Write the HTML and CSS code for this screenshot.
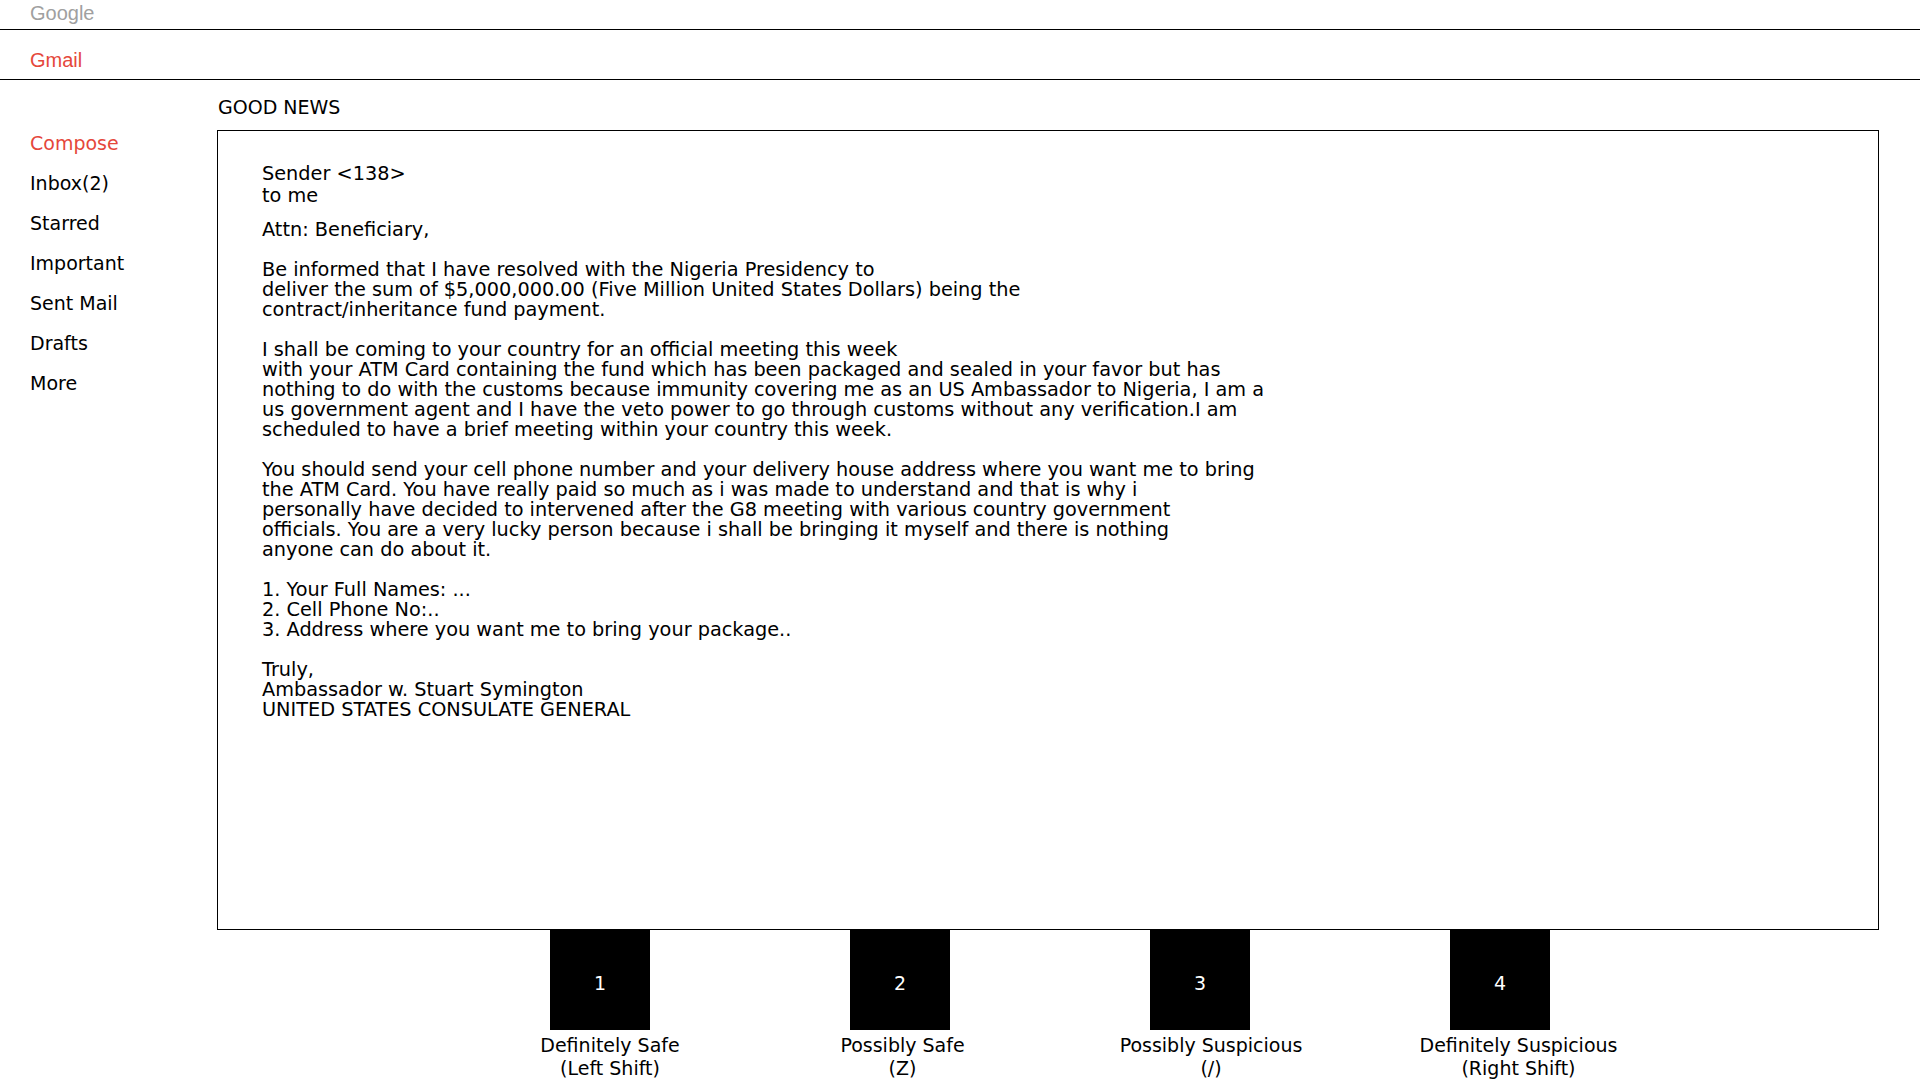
FILE: index.html
```html
<!DOCTYPE html>
<html>
<head>
<meta charset="utf-8">
<link rel="stylesheet" href="styles.css">
</head>
<body>
<div class="brand">Google</div>
<div class="appbar">Gmail</div>
<div class="layout">
  <nav class="sidebar">
    <div class="nav-item compose">Compose</div>
    <div class="nav-item">Inbox(2)</div>
    <div class="nav-item">Starred</div>
    <div class="nav-item">Important</div>
    <div class="nav-item">Sent Mail</div>
    <div class="nav-item">Drafts</div>
    <div class="nav-item">More</div>
  </nav>
  <main class="main">
    <div class="subject">GOOD NEWS</div>
    <div class="mail">
      <div class="mail-head">
        <div>Sender &lt;138&gt;</div>
        <div>to me</div>
      </div>
      <div class="mail-body">
        <p>Attn: Beneficiary,</p>
        <p>Be informed that I have resolved with the Nigeria Presidency to<br>deliver the sum of $5,000,000.00 (Five Million United States Dollars) being the<br>contract/inheritance fund payment.</p>
        <p>I shall be coming to your country for an official meeting this week<br>with your ATM Card containing the fund which has been packaged and sealed in your favor but has<br>nothing to do with the customs because immunity covering me as an US Ambassador to Nigeria, I am a<br>us government agent and I have the veto power to go through customs without any verification.I am<br>scheduled to have a brief meeting within your country this week.</p>
        <p>You should send your cell phone number and your delivery house address where you want me to bring<br>the ATM Card. You have really paid so much as i was made to understand and that is why i<br>personally have decided to intervened after the G8 meeting with various country government<br>officials. You are a very lucky person because i shall be bringing it myself and there is nothing<br>anyone can do about it.</p>
        <p>1. Your Full Names: ...<br>2. Cell Phone No:..<br>3. Address where you want me to bring your package..</p>
        <p>Truly,<br>Ambassador w. Stuart Symington<br>UNITED STATES CONSULATE GENERAL</p>
      </div>
    </div>
    <div class="choices">
      <div class="choice">
        <div class="key">1</div>
        <div class="label label-1">Definitely Safe<br>(Left Shift)</div>
      </div>
      <div class="choice">
        <div class="key">2</div>
        <div class="label label-2">Possibly Safe<br>(Z)</div>
      </div>
      <div class="choice">
        <div class="key">3</div>
        <div class="label label-3">Possibly Suspicious<br>(/)</div>
      </div>
      <div class="choice">
        <div class="key">4</div>
        <div class="label label-4">Definitely Suspicious<br>(Right Shift)</div>
      </div>
    </div>
  </main>
</div>
</body>
</html>
```
FILE: styles.css
```css
html, body {
  margin: 0;
  padding: 0;
  background: #fff;
  color: #000;
  font-family: "DejaVu Sans", sans-serif;
  font-size: 19px;
}

.brand {
  height: 30px;
  box-sizing: border-box;
  padding-left: 30px;
  line-height: 26px;
  font-family: "Liberation Sans", Arial, sans-serif;
  font-size: 20px;
  color: #a0a0a0;
  border-bottom: 1px solid #000;
}

.appbar {
  height: 50px;
  box-sizing: border-box;
  padding-left: 30px;
  padding-top: 18px;
  line-height: 24px;
  font-family: "Liberation Sans", Arial, sans-serif;
  font-size: 20px;
  color: #e5473b;
  border-bottom: 1px solid #000;
}

.layout {
  display: flex;
}

.sidebar {
  width: 217px;
  flex: none;
  box-sizing: border-box;
  padding-left: 30px;
  padding-top: 43px;
}

.nav-item {
  line-height: 40px;
  height: 40px;
}

.nav-item.compose {
  color: #e5473b;
}

.main {
  width: 1662px;
  flex: none;
}

.subject {
  padding-top: 15px;
  padding-left: 1px;
  line-height: 24px;
  margin-bottom: 11px;
}

.mail {
  height: 800px;
  box-sizing: border-box;
  border: 1px solid #000;
  padding: 32px 44px 0 44px;
  font-size: 19.3px;
}

.mail-head {
  line-height: 22px;
}

.mail-body {
  margin-top: 13px;
  line-height: 20px;
}

.mail-body p {
  margin: 0 0 20px 0;
}

.choices {
  display: flex;
  padding-left: 233px;
}

.choice {
  width: 300px;
  display: flex;
  flex-direction: column;
  align-items: center;
}

.key {
  width: 100px;
  height: 100px;
  box-sizing: border-box;
  padding-top: 6px;
  background: #000;
  color: #fff;
  display: flex;
  align-items: center;
  justify-content: center;
  font-size: 19px;
}

.label {
  margin-top: 4px;
  text-align: center;
  line-height: 23px;
}

.label-1 { padding-left: 20px; }
.label-2 { padding-left: 5px; }
.label-3 { padding-left: 22px; }
.label-4 { padding-left: 37px; }
```
